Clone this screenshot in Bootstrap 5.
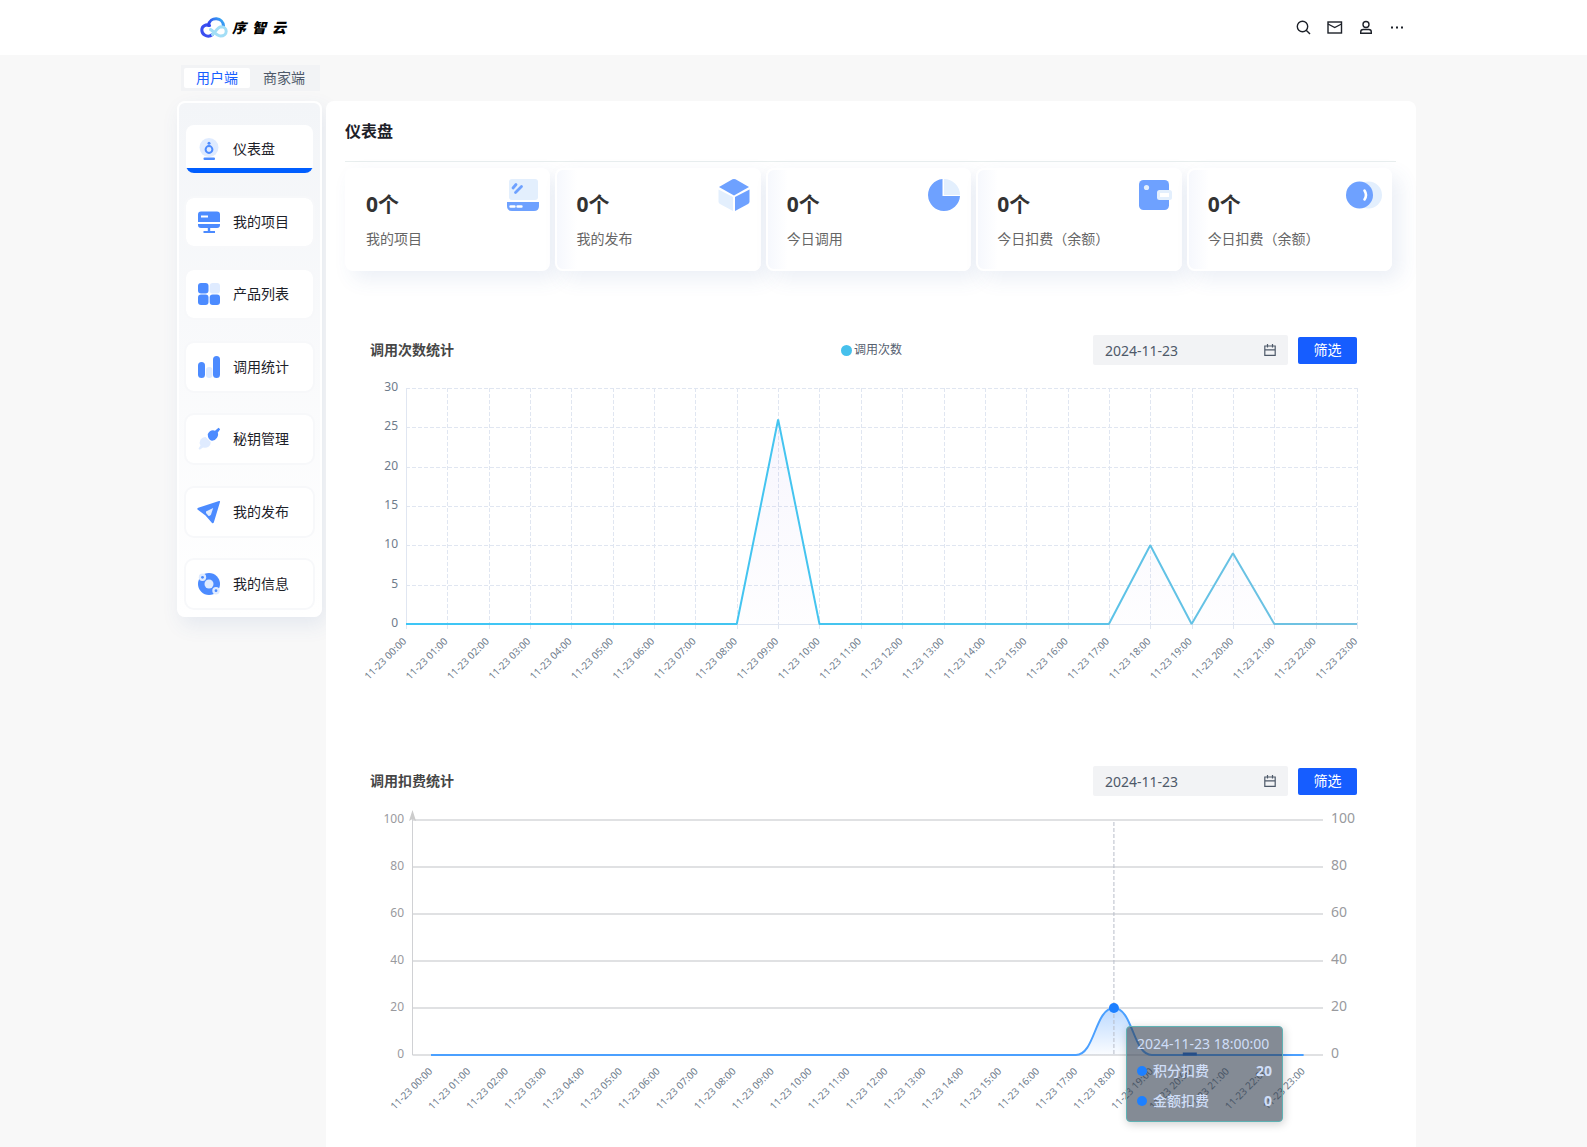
<!DOCTYPE html>
<html lang="zh-CN">
<head>
<meta charset="utf-8">
<meta name="viewport" content="width=device-width, initial-scale=1">
<title>序智云 - 仪表盘</title>
<link href="https://cdn.jsdelivr.net/npm/bootstrap@5.3.0/dist/css/bootstrap.min.css" rel="stylesheet">
<style>
  body { background: #f8f8f8; color: #1d2129; font: 14px/20px "Noto Sans", "Noto Sans CJK SC", sans-serif; }
  .site-wrap { width: 100%; max-width: 1245px; margin: 0 auto; padding-left: 6px; }
  .site-header { background: #fff; height: 55px; }
  .brand-link { padding-left: 23px; gap: 4px; }
  .brand-word { font-size: 14px; font-weight: 900; font-style: italic; color: #000; gap: 6px; }
  .tool-link { color: #1d2129; width: 16px; height: 16px; }
  .tool-list { gap: 15px; padding-right: 11px; }

  .side-head { padding: 10px 0 10px 4px; }
  .mode-switch { background: #f2f3f5; padding: 3px; gap: 1px; }
  .mode-switch label { padding: 0 12px; border-radius: 2px; color: #4e5969; cursor: pointer; }
  .mode-switch .btn-check:checked + label { background: #fff; color: #165dff; }

  .side-nav { width: 145px; min-height: 516px; border: 2px solid #fff; border-radius: 8px; padding: 20px 5px 5px;
    background: linear-gradient(#f3f5f8, #fff); box-shadow: 4px 8px 20px rgba(55, 99, 170, .1); }
  .side-nav a { height: 52px; padding: 0 12px; gap: 13px; border: 2px solid #f7f8fa; border-radius: 10px; background: #fff; background-clip: padding-box; color: #1d2129; }
  .side-nav a.active { border-color: transparent; background: linear-gradient(#005eff, #005eff) bottom / 100% 5px no-repeat padding-box, #fff padding-box; }

  .main-panel { background: #fff; border-radius: 8px 8px 0 0; margin-left: 4px; padding: 0 20px 24px 19px; min-width: 0; }
  .page-title { height: 61px; font-size: 16px; line-height: 24px; font-weight: 600; border-bottom: 1px solid #e8eeee; }
  .stat-list { padding: 6px 4px 0 0; gap: 5px; }
  .stat-card { height: 103px; padding: 22px 9px 0 19px; border: 2px solid #fff; border-radius: 8px; background: #fff; box-shadow: 8px 8px 20px rgba(55, 99, 170, .1); }
  .stat-card + .stat-card { background: linear-gradient(90deg, #f6f8fd, #fff 20px); }
  .stat-num { font-size: 21px; line-height: 24px; font-weight: 700; color: #333; }
  .stat-name { margin-top: 13px; color: #666; white-space: nowrap; }
  .stat-icon { margin-top: -15px; }

  .chart-head { padding: 0 39px 0 25px; height: 30px; }
  .chart-block { margin-top: 64px; }
  .chart-block + .chart-block { margin-top: 81px; }
  .chart-title { font-size: 14px; font-weight: 600; line-height: 20px; color: #464646; }
  .legend-item { font-size: 12px; color: #556070; gap: 2px; padding-left: 16px; }
  .legend-dot { width: 11px; height: 11px; background: #46c0ec; }
  .filter-form { gap: 10px; }
  .date-box { width: 195px; height: 30px; background: #f2f3f5; padding-right: 12px; border-radius: 2px; }
  .date-box input { border: 0; background: none; color: #4e5969; outline: 0; min-width: 0; width: 100px; font-size: 14px; line-height: 20px; height: 30px; padding: 0 12px; }
  .filter-btn { width: 59px; height: 27px; background: #165dff; color: #fff; border: 0; border-radius: 2px; padding: 0 8px; font-size: 14px; line-height: 26px; }
  .filter-btn:hover { background: #4080ff; color: #fff; }
  .chart-area { margin-top: 10px; }
  .chart-area svg { width: 100%; height: auto; overflow: visible; font-family: "Noto Sans", sans-serif; }

  .tip-box { left: 781px; top: 220px; width: 157px; height: 96px; padding: 7px 10px; background: rgba(50, 61, 79, .6);
    border: 1px solid #5fb2b4; border-radius: 4px; color: #cfdef8; box-shadow: 1px 2px 10px rgba(0, 0, 0, .2); }
  .tip-row { margin-top: 7px; gap: 6px; font-weight: 500; }
  .tip-row + .tip-row { margin-top: 10px; }
  .tip-dot { width: 10px; height: 10px; background: #1e80ff; }
</style>
<script src="https://cdn.jsdelivr.net/npm/bootstrap@5.3.0/dist/js/bootstrap.bundle.min.js"></script>
</head>
<body class="d-flex flex-column min-vh-100">

<header class="site-header">
  <div class="site-wrap d-flex align-items-center justify-content-between h-100">
    <a href="#" class="brand-link d-flex align-items-center text-decoration-none" aria-label="序智云">
      <svg width="28" height="21" viewBox="0 0 28 21" fill="none" stroke-width="3" stroke-linecap="round">
        <defs><linearGradient id="cloudBlue" x1="0" y1="0.6" x2="1" y2="0.2"><stop offset="0" stop-color="#3346ee"/><stop offset="1" stop-color="#36adf3"/></linearGradient></defs>
        <path d="M12.500 17.500C10 19.500 7 19.500 4.600 18C1 15.700 .8 10.500 4.500 8.600C6 7.800 8 7.700 9.500 8.500" stroke="#3a4ff0"/>
        <path d="M8.500 8.500C9 3.500 13 1.500 16.500 1.700C20.500 2 23.300 5 23.500 8.800" stroke="url(#cloudBlue)"/>
        <path d="M10.500 12.500C13 13.500 16 18.500 20.500 19C24 19 26.200 16.700 26.200 14.200C26.200 11.700 24 9.700 21.500 9.700C17.500 9.800 15.500 15 12.500 17.500" stroke="#a3def6"/>
      </svg>
      <span class="brand-word d-flex"><span>序</span><span>智</span><span>云</span></span>
    </a>
    <nav class="tool-list d-flex" aria-label="工具">
      <a class="tool-link d-flex" href="#" aria-label="搜索"><svg width="16" height="16" viewBox="0 0 16 16" fill="none" stroke="currentColor" stroke-width="1.400"><circle cx="6.500" cy="6.500" r="5.200"/><path d="M10.200 10.200L14 14"/></svg></a>
      <a class="tool-link d-flex" href="#" aria-label="消息"><svg width="16" height="16" viewBox="0 0 16 16" fill="none" stroke="currentColor" stroke-width="1.400"><rect x="1" y="2" width="13.500" height="11"/><path d="M1 4L7.700 7.500L14.500 4"/></svg></a>
      <a class="tool-link d-flex" href="#" aria-label="用户"><svg width="16" height="16" viewBox="0 0 16 16" fill="none" stroke="currentColor" stroke-width="1.400"><circle cx="8" cy="4.500" r="3"/><path d="M2.700 13.300V12Q2.700 9.500 5.200 9.500H10.800Q13.300 9.500 13.300 12V13.300Z"/></svg></a>
      <a class="tool-link d-flex" href="#" aria-label="更多"><svg width="16" height="16" viewBox="0 0 16 16" fill="currentColor"><path d="M2 6.500h2v2H2zM7 6.500h2v2H7zM12 6.500h2v2h-2z"/></svg></a>
    </nav>
  </div>
</header>

<div class="site-wrap d-flex flex-column flex-grow-1">
  <div class="side-head d-flex">
    <div class="mode-switch d-flex" role="group" aria-label="端切换">
      <input type="radio" class="btn-check" name="mode" id="modeUser" checked><label for="modeUser">用户端</label>
      <input type="radio" class="btn-check" name="mode" id="modeShop"><label for="modeShop">商家端</label>
    </div>
  </div>
  <div class="d-flex align-items-start flex-grow-1">
    <nav class="side-nav d-flex flex-column justify-content-between flex-shrink-0" aria-label="主菜单">
      <a class="active d-flex align-items-center text-decoration-none" href="#" aria-current="page">
        <svg width="22" height="24" viewBox="0 0 22 24"><circle cx="11" cy="10.500" r="9.500" fill="#dfebff"/><circle cx="11" cy="12.500" r="3.400" fill="none" stroke="#4c8bff" stroke-width="2"/><circle cx="11" cy="6.300" r="1.500" fill="#4c8bff"/><rect x="5.500" y="20.500" width="11.500" height="2.500" rx="1" fill="#4c8bff"/></svg>
        <span>仪表盘</span></a>
      <a class="d-flex align-items-center text-decoration-none" href="#">
        <svg width="22" height="24" viewBox="0 0 22 24" fill="#4c8bff"><path d="M3 1.500H19Q22 1.500 22 4.500V12H0V4.500Q0 1.500 3 1.500ZM0 14H22V15Q22 18 19 18H12.200V21H17V23H5.500V21H9.800V18H3Q0 18 0 15Z"/><rect x="3" y="5.500" width="7" height="2" fill="#fff"/></svg>
        <span>我的项目</span></a>
      <a class="d-flex align-items-center text-decoration-none" href="#">
        <svg width="22" height="24" viewBox="0 0 22 24" fill="#4c8bff"><rect y="1" width="10.500" height="10.500" rx="3"/><rect x="11.700" y="1" width="10.300" height="10.500" rx="3" fill="#dfebff"/><rect y="12.500" width="10.500" height="10.500" rx="3"/><rect x="11.700" y="12.500" width="10.300" height="10.500" rx="3"/></svg>
        <span>产品列表</span></a>
      <a class="d-flex align-items-center text-decoration-none" href="#">
        <svg width="22" height="24" viewBox="0 0 22 24" fill="#4c8bff"><rect y="7" width="7" height="16" rx="3.500"/><rect x="8" y="12" width="6.500" height="11" rx="3.200" fill="#dfebff"/><rect x="15" y="1" width="7" height="22" rx="3.500"/></svg>
        <span>调用统计</span></a>
      <a class="d-flex align-items-center text-decoration-none" href="#">
        <svg width="22" height="24" viewBox="0 0 22 24"><path d="M9.800 7Q11.500 3.500 15 3.200L17 3.700L20.500 .8L22.200 2.300L19.700 5.800Q20.800 8 19 10.800Q17 14 13.800 13.800Q9.500 12 9.800 7Z" fill="#4c8bff"/><path d="M2.500 12.500Q4.500 9.800 7.500 10L12.800 15Q12.800 18 10.500 19.800Q8 21.500 5 20.500L1.800 22.800L.5 21.500L2.500 18.500Q.8 15.500 2.500 12.500Z" fill="#dfebff"/></svg>
        <span>秘钥管理</span></a>
      <a class="d-flex align-items-center text-decoration-none" href="#">
        <svg width="22" height="24" viewBox="0 0 22 24" overflow="visible"><path d="M21 1Q22.300 .7 22 2L15.800 22.500Q15 24 13.800 22.800L7.500 15.500L-.5 9.500Q-1.200 8.200 .3 7.700Z" fill="#4c8bff"/><path d="M15.200 8L8 11.500V13L10.500 16Q12 16 13 14.500Z" fill="#dfebff"/></svg>
        <span>我的发布</span></a>
      <a class="d-flex align-items-center text-decoration-none" href="#">
        <svg width="22" height="24" viewBox="0 0 22 24"><circle cx="11" cy="12" r="11" fill="#4c8bff"/><circle cx="11" cy="12" r="4.500" fill="#dfebff"/><circle cx="4.500" cy="5.300" r="3.700" fill="#dfebff"/><circle cx="4.500" cy="5.300" r="1.400" fill="#4c8bff"/><circle cx="18" cy="18.700" r="3.700" fill="#dfebff"/><circle cx="18" cy="18.700" r="1.400" fill="#4c8bff"/></svg>
        <span>我的信息</span></a>
    </nav>

    <main class="main-panel flex-grow-1 align-self-stretch">
      <h1 class="page-title d-flex align-items-center m-0">仪表盘</h1>
      <div class="stat-list d-flex">
        <div class="stat-card d-flex justify-content-between flex-fill w-100">
          <div><div class="stat-num">0个</div><div class="stat-name">我的项目</div></div>
          <svg class="stat-icon flex-shrink-0" width="32" height="36" viewBox="0 0 32 36"><rect x="2" y="2" width="29" height="21" rx="3" fill="#e3effd"/><path d="M6 11L9 7.500M8.500 15.500L14.500 9.500" stroke="#6ea1ff" stroke-width="2.800" stroke-linecap="round"/><path d="M0 25H32V29Q32 34 27 34H5Q0 34 0 29Z" fill="#6ea1ff"/><path d="M3.500 29.500H7.500M10.500 29.500H14.500" stroke="#fff" stroke-width="2.400" stroke-linecap="round"/></svg>
        </div>
        <div class="stat-card d-flex justify-content-between flex-fill w-100">
          <div><div class="stat-num">0个</div><div class="stat-name">我的发布</div></div>
          <svg class="stat-icon flex-shrink-0" width="32" height="36" viewBox="0 0 32 36"><path d="M14.500 2.300Q16 1.500 17.500 2.300L31 10L16 18.500L1 10Z" fill="#6ea1ff"/><path d="M.5 12.500L15 20V34L2 27Q.5 26 .5 24.500Z" fill="#e3effd"/><path d="M17 20L31.500 12.500V24.500Q31.500 26 30 27L17 34Z" fill="#6ea1ff"/></svg>
        </div>
        <div class="stat-card d-flex justify-content-between flex-fill w-100">
          <div><div class="stat-num">0个</div><div class="stat-name">今日调用</div></div>
          <svg class="stat-icon flex-shrink-0" width="32" height="36" viewBox="0 0 32 36"><path d="M14.500 2A16 16 0 1 0 32 19H14.500Z" fill="#6ea1ff"/><path d="M16 2A16 16 0 0 1 32 18H16Z" fill="#e3effd"/></svg>
        </div>
        <div class="stat-card d-flex justify-content-between flex-fill w-100">
          <div><div class="stat-num">0个</div><div class="stat-name">今日扣费（余额）</div></div>
          <svg class="stat-icon flex-shrink-0" width="32" height="36" viewBox="0 0 32 36" overflow="visible"><rect y="3" width="30" height="30" rx="4.500" fill="#6ea1ff"/><circle cx="7.500" cy="10.500" r="2.600" fill="#e3effd"/><rect x="18" y="13" width="15" height="10" rx="2.500" fill="#e3effd"/><rect x="21" y="16" width="9" height="4" fill="#fff"/></svg>
        </div>
        <div class="stat-card d-flex justify-content-between flex-fill w-100">
          <div><div class="stat-num">0个</div><div class="stat-name">今日扣费（余额）</div></div>
          <svg class="stat-icon flex-shrink-0" width="35" height="36" viewBox="0 0 35 36" overflow="visible"><circle cx="22.500" cy="18" r="13.500" fill="#e3effd"/><circle cx="13.500" cy="18" r="13.500" fill="#6ea1ff"/><path d="M18.500 13.500Q21.500 18 18.500 22.500" fill="none" stroke="#fff" stroke-width="2.600" stroke-linecap="round"/></svg>
        </div>
      </div>

      <section class="chart-block">
        <div class="chart-head row g-0 align-items-center flex-nowrap">
          <div class="col"><h2 class="chart-title m-0">调用次数统计</h2></div>
          <div class="col-auto legend-item d-flex align-items-center"><span class="legend-dot rounded-circle"></span><span>调用次数</span></div>
          <form class="filter-form col d-flex align-items-center justify-content-end" onsubmit="return false">
            <div class="date-box d-flex align-items-center">
              <input class="flex-grow-1" type="text" value="2024-11-23" aria-label="调用次数统计日期">
              <svg class="flex-shrink-0" width="12" height="14" viewBox="0 0 12 14" fill="none" stroke="#4e5969" stroke-width="1.200"><path d="M.8 3H11.200V12.400H.8ZM.8 6.800H11.200M3.500 1V4.500M8.500 1V4.500"/></svg>
            </div>
            <button class="btn filter-btn" type="submit">筛选</button>
          </form>
        </div>
        <div class="chart-area"><svg id="callsChart" class="d-block" viewBox="0 0 1051 310" role="img" aria-label="调用次数统计"></svg></div>
      </section>

      <section class="chart-block">
        <div class="chart-head d-flex align-items-center">
          <h2 class="chart-title m-0 flex-grow-1">调用扣费统计</h2>
          <form class="filter-form d-flex align-items-center" onsubmit="return false">
            <div class="date-box d-flex align-items-center">
              <input class="flex-grow-1" type="text" value="2024-11-23" aria-label="调用扣费统计日期">
              <svg class="flex-shrink-0" width="12" height="14" viewBox="0 0 12 14" fill="none" stroke="#4e5969" stroke-width="1.200"><path d="M.8 3H11.200V12.400H.8ZM.8 6.800H11.200M3.500 1V4.500M8.500 1V4.500"/></svg>
            </div>
            <button class="btn filter-btn" type="submit">筛选</button>
          </form>
        </div>
        <div class="chart-area position-relative">
          <svg id="feesChart" class="d-block" viewBox="0 0 1051 310" role="img" aria-label="调用扣费统计"></svg>
          <div class="tip-box position-absolute">
            <div>2024-11-23 18:00:00</div>
            <div class="tip-row d-flex align-items-center"><span class="tip-dot rounded-circle"></span><span class="flex-grow-1">积分扣费</span><b>20</b></div>
            <div class="tip-row d-flex align-items-center"><span class="tip-dot rounded-circle"></span><span class="flex-grow-1">金额扣费</span><b>0</b></div>
          </div>
        </div>
      </section>
    </main>
  </div>
</div>

<script>
  const hours = Array.from({ length: 24 }, (_, h) => '11-23 ' + String(h).padStart(2, '0') + ':00');
  const line = (x1, y1, x2, y2, attrs) => `<line x1="${x1}" y1="${y1}" x2="${x2}" y2="${y2}" ${attrs}/>`;
  const label = (x, y, text, attrs) => `<text x="${x}" y="${y}" ${attrs}>${text}</text>`;
  const hourLabel = (x, y, text) => label(0, 0, text, `transform="translate(${x} ${y}) rotate(-45)" text-anchor="end" font-size="10" fill="#6e7b8b"`);

  // Calls per hour
  (function () {
    const left = 61, right = 1012, top = 13, bottom = 249, step = (right - left) / 23;
    const calls = new Array(24).fill(0);
    calls[9] = 26; calls[18] = 10; calls[20] = 9;
    const X = i => left + i * step, Y = v => bottom - v * (bottom - top) / 30;
    const snap = v => Math.round(v) + .5;
    let out = `<defs><linearGradient id="callLine" gradientUnits="userSpaceOnUse" x1="${left}" y1="0" x2="${right}" y2="0"><stop offset="0" stop-color="#3ec6f6"/><stop offset=".5" stop-color="#46c4ee"/><stop offset="1" stop-color="#74c1e0"/></linearGradient>
      <linearGradient id="callFill" x1="0" y1="0" x2="0" y2="1"><stop offset="0" stop-color="#8f7bea" stop-opacity=".07"/><stop offset="1" stop-color="#8f7bea" stop-opacity=".01"/></linearGradient></defs>`;
    for (let v = 0; v <= 30; v += 5) {
      out += line(left, snap(Y(v)), right, snap(Y(v)), v ? 'stroke="#e0e6f1" stroke-dasharray="4 2"' : 'stroke="#e0e6f1"');
      out += label(53, Y(v) + 3, v, 'text-anchor="end" font-size="12" fill="#6e7b8b"');
    }
    hours.forEach((h, i) => {
      out += line(snap(X(i)), top, snap(X(i)), bottom, i ? 'stroke="#e0e6f1" stroke-dasharray="4 2"' : 'stroke="#e0e6f1"');
      out += line(snap(X(i)), bottom, snap(X(i)), bottom + 5, 'stroke="#e0e6f1"');
      out += hourLabel(X(i) + 1, 267, h);
    });
    const pts = calls.map((v, i) => `${X(i)},${Y(v)}`).join(' ');
    out += `<polygon points="${left},${bottom} ${pts} ${right},${bottom}" fill="url(#callFill)"/>`;
    out += `<polyline points="${pts}" fill="none" stroke="url(#callLine)" stroke-width="2" stroke-linejoin="bevel"/>`;
    document.getElementById('callsChart').innerHTML = out;
  })();

  // Fees per hour
  (function () {
    const axis = 67.5, end = 978, left = 86, top = 14, bottom = 249, step = 37.94;
    const X = i => left + i * step, Y = v => bottom - v * (bottom - top) / 100;
    let out = '<defs><linearGradient id="feeFill" x1="0" y1="0" x2="0" y2="1"><stop offset="0" stop-color="#1e80ff" stop-opacity=".3"/><stop offset="1" stop-color="#1e80ff" stop-opacity=".02"/></linearGradient></defs>';
    for (let v = 0; v <= 100; v += 20) {
      out += line(axis, Y(v), end, Y(v), 'stroke="#e0e1e3" stroke-width="2"');
      out += label(59, Y(v) + 3, v, 'text-anchor="end" font-size="12" fill="#999a9e"');
      out += label(986, Y(v) + 3, v, 'font-size="14" fill="#999a9e"');
    }
    out += line(axis, 12, axis, bottom, 'stroke="#d0d1d4"');
    out += '<path d="M67.500 4L71 15L67.500 13L64 15Z" fill="#ccc"/>';
    hours.forEach((h, i) => { out += hourLabel(X(i) + 2, 266, h); });
    const a = X(17), p = X(18), b = X(19), y0 = Y(0), y1 = Y(20);
    const curve = `C${a + 19} ${y0} ${p - 19} ${y1} ${p} ${y1} C${p + 19} ${y1} ${b - 19} ${y0} ${b} ${y0}`;
    out += `<path d="M${a} ${y0} ${curve}Z" fill="url(#feeFill)"/>`;
    out += `<path d="M${left} ${y0} L${a} ${y0} ${curve} L${X(23)} ${y0}" fill="none" stroke="#4ba0ff" stroke-width="2"/>`;
    out += line(X(20) - 7, y0 - 1, X(20) + 7, y0 - 1, 'stroke="#1668dc" stroke-width="3"');
    out += line(p, top + 2, p, bottom, 'stroke="#b9bec9" stroke-dasharray="4 2"');
    out += `<circle cx="${p}" cy="${y1}" r="5" fill="#1e80ff"/>`;
    document.getElementById('feesChart').innerHTML = out;
  })();
</script>
</body>
</html>
